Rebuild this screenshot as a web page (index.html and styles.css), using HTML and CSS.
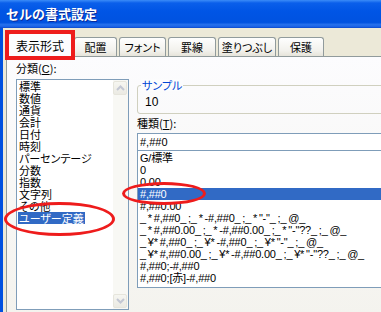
FILE: index.html
```html
<!DOCTYPE html>
<html lang="ja">
<head>
    <meta charset="UTF-8">
    <title>セルの書式設定</title>
    <link rel="stylesheet" href="styles.css">
</head>
<body>
    <div class="window">
        <div class="titlebar">セルの書式設定</div>

        <div class="frame">
            <div class="tabs">
                <div class="tab active">表示形式</div>
                <div class="tab w-haichi">配置</div>
                <div class="tab w-font">フォント</div>
                <div class="tab w-keisen">罫線</div>
                <div class="tab w-nuri">塗りつぶし</div>
                <div class="tab w-hogo">保護</div>
            </div>

            <div class="panel">
                <div class="left">
                    <div class="label">分類(<u>C</u>):</div>
                    <div class="catbox">
                        <ul class="cats">
                            <li><span>標準</span></li>
                            <li><span>数値</span></li>
                            <li><span>通貨</span></li>
                            <li><span>会計</span></li>
                            <li><span>日付</span></li>
                            <li><span>時刻</span></li>
                            <li><span>パーセンテージ</span></li>
                            <li><span>分数</span></li>
                            <li><span>指数</span></li>
                            <li><span>文字列</span></li>
                            <li><span>その他</span></li>
                            <li class="selected"><span>ユーザー定義</span></li>
                        </ul>
                        <div class="scroll">
                            <div class="sbtn">
                                <svg width="9" height="6" viewBox="0 0 9 6"><path d="M1 5 L4.5 1.5 L8 5" fill="none" stroke="#c3c7d3" stroke-width="2"/></svg>
                            </div>
                            <div class="track"></div>
                            <div class="sbtn">
                                <svg width="9" height="6" viewBox="0 0 9 6"><path d="M1 1 L4.5 4.5 L8 1" fill="none" stroke="#c3c7d3" stroke-width="2"/></svg>
                            </div>
                        </div>
                    </div>
                </div>

                <div class="right">
                    <div class="sample">
                        <span class="legend">サンプル</span>
                        <div class="value">10</div>
                    </div>
                    <div class="label">種類(<u>T</u>):</div>
                    <div class="typeinput">#,##0</div>
                    <ul class="types">
                        <li>G/標準</li>
                        <li>0</li>
                        <li>0.00</li>
                        <li class="selected">#,##0</li>
                        <li>#,##0.00</li>
                        <li>_ * #,##0_ ;_ * -#,##0_ ;_ * "-"_ ;_ @_</li>
                        <li>_ * #,##0.00_ ;_ * -#,##0.00_ ;_ * "-"??_ ;_ @_</li>
                        <li>_ ¥* #,##0_ ;_ ¥* -#,##0_ ;_ ¥* "-"_ ;_ @_</li>
                        <li>_ ¥* #,##0.00_ ;_ ¥* -#,##0.00_ ;_ ¥* "-"??_ ;_ @_</li>
                        <li>#,##0;-#,##0</li>
                        <li>#,##0;[赤]-#,##0</li>
                    </ul>
                </div>
            </div>
        </div>

        <!-- red annotation marks -->
        <div class="mark mark-tab"></div>
        <div class="mark mark-user"></div>
        <div class="mark mark-code"></div>
    </div>
</body>
</html>
```

FILE: styles.css
```css
* {
    box-sizing: border-box;
}
body {
    margin: 0;
    width: 381px;
    height: 312px;
    overflow: hidden;
    font-family: "Noto Sans CJK JP", sans-serif;
    font-size: 11px;
    line-height: 12px;
    color: #000;
}
ul {
    margin: 0;
    padding: 0;
    list-style: none;
}
.window {
    position: relative;
    width: 381px;
    height: 312px;
    overflow: hidden;
}
.titlebar {
    height: 28px;
    padding-left: 6px;
    line-height: 28px;
    font-size: 13px;
    font-weight: bold;
    color: #fff;
    text-shadow: 1px 1px 0 #0a2a9a;
    background: linear-gradient(#3b8cf8 0, #0a5fea 3px, #0055e5 40%, #0052e0 80%, #2670ec 88%, #1a62e6 95%, #0a48c8 100%);
}
.frame {
    height: 284px;
    background-color: #ece9d8;
    border-left: 3px solid #0050e0;
}

/* tabs */
.tabs {
    display: flex;
    align-items: flex-end;
    height: 28px;
    padding-left: 5px;
    font-feature-settings: "palt";
}
.tab {
    height: 19px;
    margin-right: 2px;
    border: 1px solid #919b9c;
    border-bottom: none;
    border-radius: 3px 3px 0 0;
    background: linear-gradient(#fefefe, #f2f1ec 70%, #e6e4da);
    text-align: center;
    line-height: 18px;
    font-size: 11px;
}
.tab.active {
    width: 64px;
    height: 25px;
    margin-bottom: -1px;
    position: relative;
    z-index: 1;
    background: #fcfcfe;
    border-top: 2px solid #e68b2c;
    line-height: 24px;
    font-size: 12px;
}
.w-haichi { width: 43px; }
.w-font { width: 47px; }
.w-keisen { width: 48px; }
.w-nuri { width: 58px; }
.w-hogo { width: 46px; }

.panel {
    display: flex;
    gap: 8px;
    height: 260px;
    margin-left: 3px;
    padding: 5px 0 0 9px;
    border: 1px solid #919b9c;
    border-right: none;
    background: linear-gradient(#fcfcfe, #f4f3ee);
}
.label {
    height: 12px;
    font-feature-settings: "palt";
}
.label u {
    font-family: "Liberation Sans", sans-serif;
}

/* category list */
.left {
    width: 113px;
    flex: none;
}
.catbox {
    display: flex;
    height: 231px;
    margin-top: 5px;
    border: 1px solid #7f9db9;
    background-color: #fff;
}
.cats {
    flex: 1;
    padding-left: 1px;
    font-feature-settings: "palt";
}
.cats li {
    height: 12px;
}
.cats span {
    display: inline-block;
    padding: 0 1px;
}
.cats .selected span {
    background-color: #316ac5;
    color: #fff;
}
.scroll {
    display: flex;
    flex-direction: column;
    width: 15px;
    padding: 1px 1px 1px 0;
    background-color: #f8f8f4;
}
.sbtn {
    display: flex;
    align-items: center;
    justify-content: center;
    height: 14px;
    border: 1px solid #e6e5dc;
    border-radius: 2px;
    background: linear-gradient(#f6f6f1, #ebeae3);
}
.track {
    flex: 1;
}

/* right column */
.right {
    flex: 1;
    min-width: 0;
    padding-top: 23px;
}
.sample {
    position: relative;
    width: 320px;
    height: 29px;
    border: 1px solid #d0d0bf;
    border-radius: 3px;
}
.legend {
    position: absolute;
    top: -7px;
    left: 3px;
    padding: 0 1px;
    color: #0046d5;
    background-color: #fcfcfd;
    font-feature-settings: "palt";
}
.value {
    padding: 10px 0 0 7px;
    font-family: "Liberation Sans", sans-serif;
    font-size: 12px;
}
.right .label {
    margin-top: 3px;
}
.typeinput {
    height: 18px;
    margin-top: 4px;
    padding-left: 2px;
    border: 1px solid #7f9db9;
    border-right: none;
    background-color: #fff;
    line-height: 16px;
    font-family: "Liberation Sans", "Noto Sans CJK JP", sans-serif;
}
.types {
    height: 137px;
    padding-top: 1px;
    border: 1px solid #7f9db9;
    border-top: none;
    border-right: none;
    background-color: #fff;
    font-family: "Liberation Sans", "Noto Sans CJK JP", sans-serif;
    letter-spacing: -0.2px;
    word-spacing: -1px;
}
.types li {
    height: 12px;
    padding-left: 2px;
    white-space: pre;
}
.types .selected {
    background-color: #316ac5;
    color: #fff;
}

/* annotations */
.mark {
    position: absolute;
    z-index: 5;
    pointer-events: none;
}
.mark-tab {
    left: 5px;
    top: 30px;
    width: 70px;
    height: 30px;
    border: 4px solid #ee1c1c;
}
.mark-user {
    left: 4px;
    top: 202px;
    width: 111px;
    height: 34px;
    border: 3px solid #ee1c1c;
    border-radius: 50%;
}
.mark-code {
    left: 122px;
    top: 182px;
    width: 84px;
    height: 23px;
    border: 3px solid #ee1c1c;
    border-radius: 50%;
}
```
